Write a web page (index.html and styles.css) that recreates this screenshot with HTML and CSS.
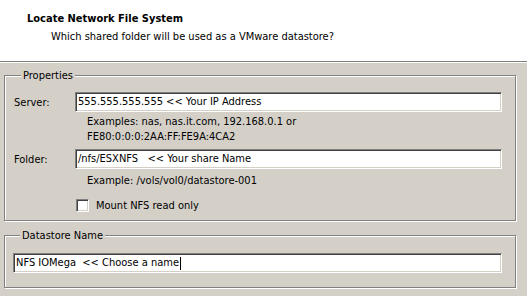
FILE: index.html
```html
<!DOCTYPE html>
<html>
<head>
<meta charset="utf-8">
<link rel="stylesheet" href="styles.css">
</head>
<body>
<div class="header">
  <div class="title">Locate Network File System</div>
  <div class="subtitle">Which shared folder will be used as a VMware datastore?</div>
</div>
<div class="content">
  <div class="group props">
    <span class="group-title">Properties</span>
    <div class="row row-server">
      <span class="label">Server:</span>
      <div class="field">555.555.555.555 &lt;&lt; Your IP Address</div>
    </div>
    <div class="hint hint-server">Examples: nas, nas.it.com, 192.168.0.1 or<br>FE80:0:0:0:2AA:FF:FE9A:4CA2</div>
    <div class="row row-folder">
      <span class="label">Folder:</span>
      <div class="field">/nfs/ESXNFS &nbsp;&nbsp;&lt;&lt; Your share Name</div>
    </div>
    <div class="hint hint-folder">Example: /vols/vol0/datastore-001</div>
    <div class="check-row">
      <span class="checkbox"></span>
      <span class="check-label">Mount NFS read only</span>
    </div>
  </div>
  <div class="group names">
    <span class="group-title">Datastore Name</span>
    <div class="field name-field">NFS IOMega &nbsp;&lt;&lt; Choose a name<span class="caret"></span></div>
  </div>
</div>
</body>
</html>
```
FILE: styles.css
```css
html, body {
  margin: 0;
  padding: 0;
}
body {
  width: 527px;
  height: 296px;
  background: #d4d0c8;
  font-family: "DejaVu Sans Condensed", "DejaVu Sans", sans-serif;
  font-size: 11px;
  color: #000;
  overflow: hidden;
}
.header {
  background: #fff;
  height: 61px;
  border-bottom: 1px solid #808080;
  box-shadow: 0 1px 0 #fff;
  box-sizing: content-box;
}
.title {
  font-weight: bold;
  font-size: 11px;
  line-height: 14px;
  padding: 12px 0 0 27px;
}
.subtitle {
  line-height: 14px;
  padding: 4px 0 0 51px;
}
.content {
  padding-top: 13px;
}
.group {
  margin-left: 4px;
  width: 510px;
  border: 1px solid #808080;
  box-shadow: inset 1px 1px 0 #fff, 1px 1px 0 #fff;
  display: flex;
  flex-direction: column;
  align-items: flex-start;
}
.group-title {
  margin: -7px 0 0 7px;
  padding: 0 2px;
  background: #d4d0c8;
  line-height: 13px;
}
.props {
  padding: 0 13px 8px 9px;
  width: 488px;
}
.names {
  margin-top: 14px;
  padding: 0 13px 14px 8px;
  width: 489px;
}
.row {
  display: flex;
  align-items: center;
  width: 100%;
}
.row-server {
  margin-top: 10px;
}
.row-folder {
  margin-top: 5px;
}
.label {
  width: 61px;
  flex: none;
}
.field {
  flex: 1;
  height: 20px;
  box-sizing: border-box;
  background: #fff;
  border: 1px solid;
  border-color: #808080 #fff #fff #808080;
  box-shadow: inset 1px 1px 0 #404040, inset -1px -1px 0 #d4d0c8;
  padding: 0 3px 0 2px;
  line-height: 18px;
  white-space: nowrap;
}
.name-field {
  width: 100%;
  margin-top: 11px;
  display: flex;
  align-items: center;
}
.caret {
  display: inline-block;
  width: 1px;
  height: 13px;
  background: #000;
  margin-left: 1px;
}
.hint {
  margin-left: 73px;
  line-height: 15px;
}
.hint-server {
  margin-top: 2px;
}
.hint-folder {
  margin-top: 4px;
}
.check-row {
  display: flex;
  align-items: center;
  margin: 11px 0 0 62px;
}
.checkbox {
  width: 13px;
  height: 13px;
  box-sizing: border-box;
  background: #fff;
  border: 1px solid;
  border-color: #808080 #fff #fff #808080;
  box-shadow: inset 1px 1px 0 #404040, inset -1px -1px 0 #d4d0c8;
}
.check-label {
  margin-left: 7px;
  line-height: 13px;
}
```
